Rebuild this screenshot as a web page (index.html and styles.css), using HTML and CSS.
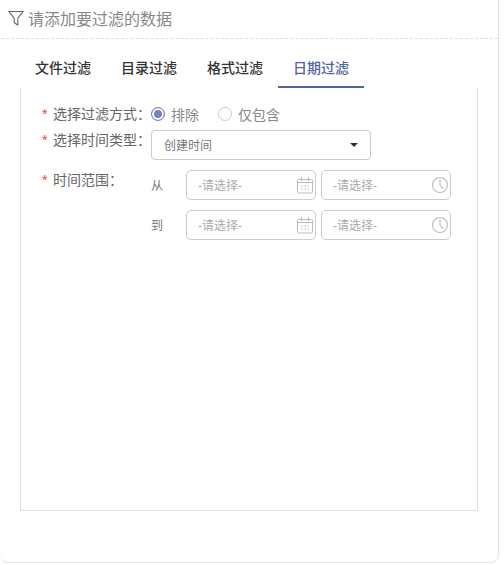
FILE: index.html
```html
<!DOCTYPE html>
<html lang="en">
<head>
    <meta charset="UTF-8">
    <title>日期过滤</title>
    <link rel="stylesheet" href="styles.css">
</head>
<body>
    <div class="card">
        <!-- Header -->
        <div class="card-title">
            <svg class="filter-icon" width="16" height="16" viewBox="0 0 16 16">
                <path d="M.8 1.500h14.400L9.800 8.200V15L6.200 12.800V8.200z" fill="none" stroke="#666" stroke-width="1.100" stroke-linejoin="round"/>
            </svg>
            <span>请添加要过滤的数据</span>
        </div>

        <!-- Tabs -->
        <div class="tabs">
            <a class="tab">文件过滤</a>
            <a class="tab">目录过滤</a>
            <a class="tab">格式过滤</a>
            <a class="tab active">日期过滤</a>
        </div>

        <!-- Date filter panel -->
        <div class="panel">
            <div class="form-row row-mode">
                <label class="form-label"><i>*</i>选择过滤方式：</label>
                <div class="radio-group">
                    <span class="radio checked"></span><span class="radio-text">排除</span>
                    <span class="radio"></span><span class="radio-text">仅包含</span>
                </div>
            </div>

            <div class="form-row row-type">
                <label class="form-label"><i>*</i>选择时间类型：</label>
                <div class="select">
                    <span class="field-text">创建时间</span>
                    <span class="caret"></span>
                </div>
            </div>

            <div class="form-row row-range">
                <label class="form-label"><i>*</i>时间范围：</label>
                <div class="range">
                    <div class="range-line">
                        <span class="range-text">从</span>
                        <div class="input date-input">
                            <span class="field-text">-请选择-</span>
                            <svg class="icon" width="18" height="18" viewBox="0 0 18 18"><use href="#calendar"/></svg>
                        </div>
                        <div class="input time-input">
                            <span class="field-text">-请选择-</span>
                            <svg class="icon" width="18" height="18" viewBox="0 0 18 18"><use href="#clock"/></svg>
                        </div>
                    </div>
                    <div class="range-line">
                        <span class="range-text">到</span>
                        <div class="input date-input">
                            <span class="field-text">-请选择-</span>
                            <svg class="icon" width="18" height="18" viewBox="0 0 18 18"><use href="#calendar"/></svg>
                        </div>
                        <div class="input time-input">
                            <span class="field-text">-请选择-</span>
                            <svg class="icon" width="18" height="18" viewBox="0 0 18 18"><use href="#clock"/></svg>
                        </div>
                    </div>
                </div>
            </div>
        </div>
    </div>

    <!-- Shared icons -->
    <svg class="icon-defs" width="0" height="0">
        <defs>
            <g id="calendar" fill="none" stroke="#bbb" stroke-width="1">
                <rect x="1.500" y="3.500" width="15" height="13.500" rx="1"/>
                <path d="M1.500 6.500h15M5.500 1v4M12.500 1v4"/>
                <path d="M5 10h1.500M8.300 10h1.500M11.500 10h1.500M5 13h1.500M8.300 13h1.500M11.500 13h1.500"/>
            </g>
            <g id="clock" fill="none" stroke="#bbb" stroke-width="1.100">
                <circle cx="9" cy="9" r="7.500"/>
                <path d="M9 3.500V9l3.500 4"/>
            </g>
        </defs>
    </svg>
</body>
</html>
```
FILE: styles.css
```css
/* Basic Reset */
* {
    margin: 0;
    padding: 0;
    box-sizing: border-box;
}

body {
    font-family: "Liberation Sans", "Noto Sans CJK SC", sans-serif;
    background-color: white;
    color: #666;
    overflow: hidden;
}

.card {
    width: 499px;
    height: 563px;
    padding-left: 1px;
    background-color: white;
    border-right: 1px solid #e4e4e4;
    border-bottom: 1px solid #e4e4e4;
    border-radius: 0 0 8px 8px;
}

/* Header */
.card-title {
    display: flex;
    align-items: center;
    gap: 4px;
    height: 39px;
    padding-left: 7px;
    padding-bottom: 2px;
    font-size: 16px;
    color: #888;
    border-bottom: 1px dashed #ddd;
}

/* Tabs */
.tabs {
    display: flex;
    height: 49px;
    margin-left: 19px;
}

.tab {
    width: 86px;
    height: 49px;
    padding-top: 19px;
    text-align: center;
    font-size: 14px;
    line-height: 20px;
    font-weight: 500;
    color: #333;
}

.tab.active {
    color: #55639f;
    border-bottom: 2px solid #55639f;
}

/* Panel */
.panel {
    width: 458px;
    height: 423px;
    margin-left: 19px;
    border: 1px solid #e0e0e0;
    border-top: none;
}

.form-row {
    display: flex;
    align-items: flex-start;
}

.row-mode {
    padding-top: 16px;
    height: 42px;
}

.row-type {
    height: 40px;
}

.form-label {
    width: 130px;
    padding-left: 21px;
    font-size: 14px;
    line-height: 20px;
    white-space: nowrap;
}

.form-label i {
    display: inline-block;
    width: 11px;
    font-style: normal;
    color: #f5403a;
}

/* Radios */
.radio-group {
    display: flex;
    align-items: center;
    height: 20px;
    font-size: 14px;
    color: #888;
}

.radio {
    width: 14px;
    height: 14px;
    border: 1px solid #ccc;
    border-radius: 50%;
    background-color: white;
}

.radio.checked {
    border-color: #7684b8;
    background-color: #7684b8;
    box-shadow: inset 0 0 0 2px white;
}

.radio-text {
    margin-left: 6px;
    margin-right: 19px;
}

/* Select */
.select {
    display: flex;
    justify-content: space-between;
    align-items: center;
    width: 220px;
    height: 30px;
    padding: 0 12px;
    font-size: 12px;
    color: #777;
    border: 1px solid #ccc;
    border-radius: 4px;
}

.field-text {
    margin-bottom: 2px;
}

.caret {
    width: 0;
    height: 0;
    border-left: 4px solid transparent;
    border-right: 4px solid transparent;
    border-top: 4px solid #333;
}

/* Time range */
.range {
    display: flex;
    flex-direction: column;
    gap: 10px;
}

.range-line {
    display: flex;
    align-items: center;
}

.range-text {
    width: 35px;
    margin-bottom: 2px;
    font-size: 12px;
    color: #777;
}

.input {
    display: flex;
    justify-content: space-between;
    align-items: center;
    width: 130px;
    height: 30px;
    padding: 0 1px 0 11px;
    font-size: 12px;
    color: #aaa;
    border: 1px solid #ccc;
    border-radius: 5px;
}

.time-input {
    margin-left: 5px;
}

.icon-defs {
    display: block;
    height: 0;
}
```
